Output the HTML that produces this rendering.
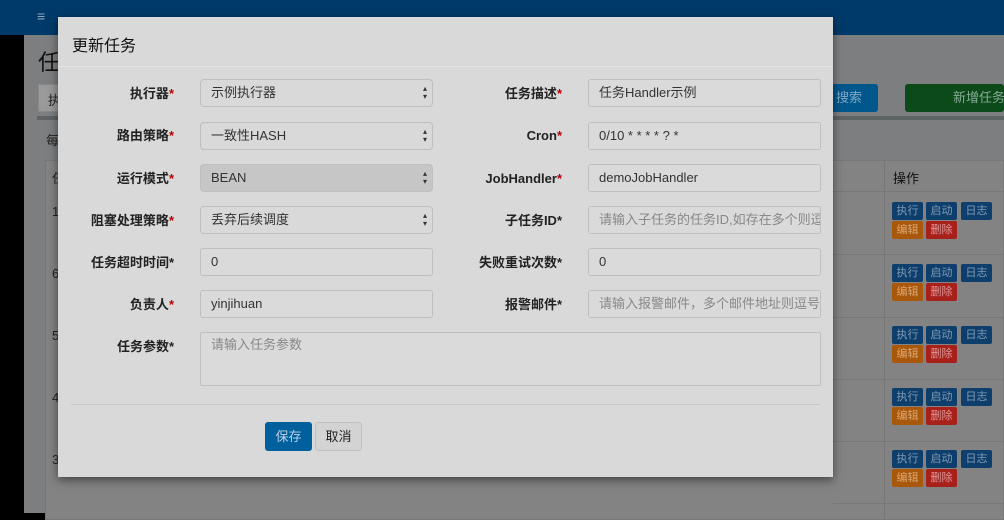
<!DOCTYPE html>
<html><head><meta charset="utf-8"><style>
*{box-sizing:border-box;margin:0;padding:0}
body{width:1004px;height:513px;overflow:hidden;position:relative;background:#000;font-family:"Liberation Sans","Noto Sans CJK SC",sans-serif;font-size:13px;color:#222}
.abs{position:absolute}
.bg{left:24px;top:35px;right:0;bottom:0;background:#7c7e80}
.top{left:0;top:0;width:1004px;height:35px;background:#003a6a}
.modal{left:58px;top:17px;width:775px;height:460px;background:#d9d9d9;box-shadow:0 3px 9px rgba(0,0,0,.5)}
.lbl{position:absolute;font-weight:bold;text-align:right;width:170px;font-size:13px;line-height:16px}
.lbl i{color:#b00;font-style:normal}
.inp{position:absolute;height:28px;border:1px solid #bfbfbf;border-radius:3px;background:#dadada;padding:0 10px;line-height:26px;font-size:13px;color:#333;white-space:nowrap;overflow:hidden}
.ph{color:#888}
.sel{border-radius:4px;background:#d9d9d9}
.sel:after{content:"\25B4\A\25BE";white-space:pre;position:absolute;right:5px;top:5px;font-size:8px;line-height:8px;color:#333}
.b{position:absolute;height:18px;border-radius:2px;color:#8aa;font-size:11px;line-height:18px;text-align:center;width:31px}
.bb{background:#0e3e6b;color:#7f9ab3}.bo{background:#a9580b;color:#d9a56f}.br{background:#a8201a;color:#d99}
</style></head><body>
<div class="abs bg"></div>
<div class="abs top"><div class="abs" style="left:37px;top:8px;color:#8fa6bf;font-size:14px">≡</div></div>
<div class="abs" style="left:38px;top:45px;font-size:22px;color:#111">任</div>
<div class="abs" style="left:38px;top:84px;width:30px;height:28px;background:#9a9a9a;border:1px solid #888"></div>
<div class="abs" style="left:48px;top:90px;color:#222">执</div>
<div class="abs" style="left:820px;top:84px;width:58px;height:28px;background:#00578c;border-radius:3px;color:#7fa8c4;line-height:28px;padding-left:16px">搜索</div>
<div class="abs" style="left:905px;top:84px;width:99px;height:28px;background:#0d4a1a;border-radius:3px;color:#8a9;line-height:28px;padding-left:48px;white-space:nowrap;overflow:hidden">新增任务</div>
<div class="abs" style="left:37px;top:116px;width:967px;height:4px;background:#5e6366"></div>
<div class="abs" style="left:46px;top:130px;color:#222">每</div>
<div class="abs" style="left:45px;top:160px;width:959px;height:360px;background:#838383;border:1px solid #777"></div>
<div class="abs" style="left:884px;top:160px;width:1px;height:360px;background:#777"></div>
<div class="abs" style="left:833px;top:191px;width:171px;height:1px;background:#777"></div>
<div class="abs" style="left:893px;top:168px;color:#111;font-size:13px">操作</div>
<div class="abs" style="left:833px;top:254px;width:171px;height:1px;background:#777"></div>
<div class="abs" style="left:833px;top:317px;width:171px;height:1px;background:#777"></div>
<div class="abs" style="left:833px;top:379px;width:171px;height:1px;background:#777"></div>
<div class="abs" style="left:833px;top:441px;width:171px;height:1px;background:#777"></div>
<div class="abs" style="left:833px;top:503px;width:171px;height:1px;background:#777"></div>
<div class="abs" style="left:52px;top:204px">1</div><div class="abs" style="left:52px;top:266px">6</div><div class="abs" style="left:52px;top:328px">5</div><div class="abs" style="left:52px;top:390px">4</div><div class="abs" style="left:52px;top:452px">3</div>
<div class="abs" style="left:52px;top:168px">任</div>

<div class="b bb" style="left:892px;top:202px">执行</div><div class="b bb" style="left:926px;top:202px">启动</div><div class="b bb" style="left:961px;top:202px">日志</div><div class="b bo" style="left:892px;top:221px">编辑</div><div class="b br" style="left:926px;top:221px">删除</div>
<div class="b bb" style="left:892px;top:264px">执行</div><div class="b bb" style="left:926px;top:264px">启动</div><div class="b bb" style="left:961px;top:264px">日志</div><div class="b bo" style="left:892px;top:283px">编辑</div><div class="b br" style="left:926px;top:283px">删除</div>
<div class="b bb" style="left:892px;top:326px">执行</div><div class="b bb" style="left:926px;top:326px">启动</div><div class="b bb" style="left:961px;top:326px">日志</div><div class="b bo" style="left:892px;top:345px">编辑</div><div class="b br" style="left:926px;top:345px">删除</div>
<div class="b bb" style="left:892px;top:388px">执行</div><div class="b bb" style="left:926px;top:388px">启动</div><div class="b bb" style="left:961px;top:388px">日志</div><div class="b bo" style="left:892px;top:407px">编辑</div><div class="b br" style="left:926px;top:407px">删除</div>
<div class="b bb" style="left:892px;top:450px">执行</div><div class="b bb" style="left:926px;top:450px">启动</div><div class="b bb" style="left:961px;top:450px">日志</div><div class="b bo" style="left:892px;top:469px">编辑</div><div class="b br" style="left:926px;top:469px">删除</div>

<div class="abs modal">
<div class="abs" style="left:14px;top:15px;font-size:16px;color:#111">更新任务</div>
<div class="abs" style="left:0;top:49px;width:775px;height:1px;background:#e4e4e4"></div>
<div class="lbl" style="left:-54px;top:69px">执行器<i>*</i></div>
<div class="inp sel" style="left:142px;top:62px;width:233px">示例执行器</div>
<div class="lbl" style="left:-54px;top:111px">路由策略<i>*</i></div>
<div class="inp sel" style="left:142px;top:105px;width:233px">一致性HASH</div>
<div class="lbl" style="left:-54px;top:154px">运行模式<i>*</i></div>
<div class="inp sel" style="left:142px;top:147px;width:233px;background:#c6c6c6">BEAN</div>
<div class="lbl" style="left:-54px;top:196px">阻塞处理策略<i>*</i></div>
<div class="inp sel" style="left:142px;top:189px;width:233px">丢弃后续调度</div>
<div class="lbl" style="left:-54px;top:238px">任务超时时间*</div>
<div class="inp" style="left:142px;top:231px;width:233px">0</div>
<div class="lbl" style="left:-54px;top:280px">负责人<i>*</i></div>
<div class="inp" style="left:142px;top:273px;width:233px">yinjihuan</div>
<div class="lbl" style="left:-54px;top:322px">任务参数*</div>
<div class="inp" style="left:142px;top:315px;width:621px;height:54px;line-height:24px;border-radius:2px"><span class="ph">请输入任务参数</span></div>

<div class="lbl" style="left:334px;top:69px">任务描述<i>*</i></div>
<div class="inp" style="left:530px;top:62px;width:233px">任务Handler示例</div>
<div class="lbl" style="left:334px;top:111px">Cron<i>*</i></div>
<div class="inp" style="left:530px;top:105px;width:233px">0/10 * * * * ? *</div>
<div class="lbl" style="left:334px;top:154px">JobHandler<i>*</i></div>
<div class="inp" style="left:530px;top:147px;width:233px">demoJobHandler</div>
<div class="lbl" style="left:334px;top:196px">子任务ID*</div>
<div class="inp" style="left:530px;top:189px;width:233px"><span class="ph">请输入子任务的任务ID,如存在多个则逗号分隔</span></div>
<div class="lbl" style="left:334px;top:238px">失败重试次数*</div>
<div class="inp" style="left:530px;top:231px;width:233px">0</div>
<div class="lbl" style="left:334px;top:280px">报警邮件*</div>
<div class="inp" style="left:530px;top:273px;width:233px"><span class="ph">请输入报警邮件，多个邮件地址则逗号分隔</span></div>

<div class="abs" style="left:13px;top:387px;width:749px;height:1px;background:#c4c8cc"></div>
<div class="abs" style="left:207px;top:405px;width:47px;height:29px;background:#00609e;border-radius:3px;color:#b9d0e2;line-height:29px;text-align:center">保存</div>
<div class="abs" style="left:257px;top:405px;width:47px;height:29px;background:#d3d3d3;border:1px solid #c0c0c0;border-radius:3px;color:#222;line-height:27px;text-align:center">取消</div>
</div>
</body></html>
